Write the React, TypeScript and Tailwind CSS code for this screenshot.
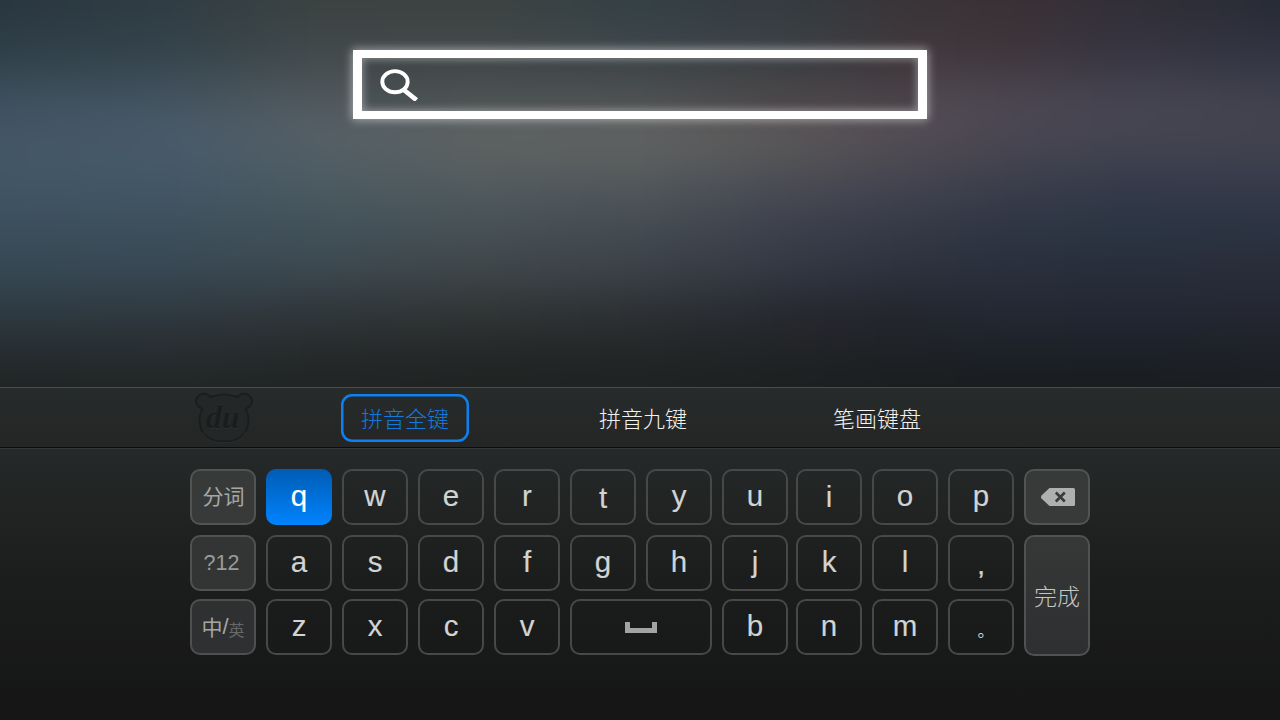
import React from "react";

// Backdrop colours: each row is a horizontal blend, rows blend into each other vertically.
// PAD is how far the blurred layers reach past the visible area.
const PAD = 32;
const STOPS = [0, 160, 320, 480, 640, 800, 900, 1010, 1120, 1280];
const ROWS: { y: number; colors: string[] }[] = [
  { y: 0, colors: ["#29363f", "#303c44", "#3b4241", "#3c4241", "#344045", "#353a3f", "#393538", "#3a3035", "#322f38", "#272b35"] },
  { y: 50, colors: ["#2f3f48", "#34434b", "#42494b", "#434a4b", "#3e474b", "#3c4145", "#40393d", "#3f363c", "#373541", "#313441"] },
  { y: 100, colors: ["#3e505e", "#435360", "#50585d", "#555b5c", "#56595a", "#534d51", "#524a51", "#4b4651", "#464451", "#42424f"] },
  { y: 130, colors: ["#435566", "#485968", "#555f66", "#5d6262", "#5f6162", "#595557", "#544d54", "#4b4753", "#464552", "#43434f"] },
  { y: 155, colors: ["#445767", "#475a6a", "#525e65", "#5b6161", "#5d605f", "#545456", "#4e4a52", "#454450", "#40424f", "#40414e"] },
  { y: 190, colors: ["#405566", "#425665", "#4b5a61", "#515a5d", "#50565a", "#484953", "#424350", "#3a3d4a", "#343a4a", "#353a4a"] },
  { y: 225, colors: ["#3c4f5c", "#3e505d", "#43525a", "#485257", "#454c53", "#3d404c", "#373b47", "#303645", "#2c3644", "#2c3443"] },
  { y: 270, colors: ["#374854", "#384854", "#3c484f", "#3f4649", "#3b4148", "#333742", "#2d323e", "#292f3c", "#282e3b", "#292d3a"] },
  { y: 310, colors: ["#2f3b43", "#303a42", "#31383c", "#323637", "#2e3235", "#272931", "#25272f", "#242934", "#242834", "#252833"] },
  { y: 350, colors: ["#272e31", "#282f32", "#272b2c", "#252929", "#242728", "#222426", "#1f2226", "#1d2229", "#1d2129", "#1f2228"] },
  { y: 387, colors: ["#202424", "#212525", "#202423", "#1f2322", "#1e2222", "#1c2021", "#1a1e1f", "#191d1f", "#191d1f", "#1b1e22"] },
];

function Backdrop() {
  return (
    <div className="-m-8 grid blur-[12px] [grid-area:1/1]" aria-hidden="true">
      {ROWS.map((row, i) => {
        const prev = i === 0 ? 0 : ROWS[i - 1].y + PAD;
        const mask = `linear-gradient(to bottom, transparent ${prev}px, black ${row.y + PAD}px)`;
        const fill = row.colors.map((c, k) => `${c} ${STOPS[k] + PAD}px`).join(", ");
        return (
          <div
            key={row.y}
            className="[grid-area:1/1]"
            style={{
              backgroundImage: `linear-gradient(to right, ${fill})`,
              maskImage: i === 0 ? undefined : mask,
            }}
          />
        );
      })}
    </div>
  );
}

function SearchBox() {
  return (
    <div className="flex h-[69px] w-[574px] items-start border-x-[9px] border-y-8 border-white bg-[#00000014] shadow-[0_0_9px_1px_rgba(255,255,255,0.5),inset_0_0_8px_1px_rgba(255,255,255,0.42)]">
      <svg className="mt-[10px] ml-[17px] h-[33px] w-[40px]" viewBox="0 0 40 33" fill="none" stroke="#fff">
        <ellipse cx="16" cy="13.700" rx="12.700" ry="10.600" strokeWidth="3.900" />
        <path d="M25 22 L37.500 32" strokeWidth="4.800" />
      </svg>
    </div>
  );
}

function BearLogo() {
  return (
    <svg className="h-[54px] w-[60px]" viewBox="0 0 60 54">
      <path
        d="M8.500 18C2 15.500 .8 10 3 6.500C6 1.500 13 1.500 17 6C25 3 35 3 43 6C47 1.500 54 1.500 57 6.500C59.200 10 58 15.500 51.500 18C54.500 23 55.500 31 52.500 39C48.500 47 41 50.500 30 50.500C18.500 50.500 11 47 7.500 39C4.500 31 5.500 23 8.500 18Z"
        fill="#242727"
        stroke="#1b1e1e"
        strokeWidth="2"
      />
      <path d="M8 41C12 49 19 52 30 52C41 52 48 49 52 41" fill="none" stroke="#2b2e2e" strokeWidth="1" />
      <text x="29.500" y="38" textAnchor="middle" fill="#2c2f2f" className="font-['Liberation_Serif',serif] text-[32px] font-bold italic">du</text>
      <text x="28.800" y="37.200" textAnchor="middle" fill="#1a1d1d" className="font-['Liberation_Serif',serif] text-[32px] font-bold italic">du</text>
    </svg>
  );
}

function TabBar() {
  return (
    <div className="flex h-[61px] items-start border-t border-b border-t-[#4a4d4e] border-b-[#0b0c0c] bg-linear-to-b from-[#272b2b] to-[#242625] font-['Noto_Sans_CJK_SC',sans-serif] text-[22px] font-light text-[#f2f2f2]">
      <div className="mt-[3px] ml-[194px]">
        <BearLogo />
      </div>
      <div className="mt-[6px] ml-[87px] flex h-12 w-32 items-center justify-center rounded-[11px] pb-px text-[#1478dd] shadow-[inset_0_0_0_2.5px_#0f80f0]">
        拼音全键
      </div>
      <div className="mt-[6px] ml-[110px] flex h-12 w-32 items-center justify-center pb-px">拼音九键</div>
      <div className="mt-[6px] ml-[106px] flex h-12 w-32 items-center justify-center pb-px">笔画键盘</div>
    </div>
  );
}

const KEY = "flex h-14 items-center justify-center rounded-[10px]";
const DARK = "border-2 border-[#474949]";
const GREY = "border-2 border-[#525454] bg-[#383a3a]";

function LetterKey({ children }: { children: string }) {
  const active = children === "q";
  return (
    <div
      className={`${KEY} pb-[2px] text-[29.5px] leading-none [-webkit-text-stroke:0.15px] ${
        active ? "bg-linear-to-b from-[#005cb4] to-[#0084ff] text-white" : `${DARK} text-[#d2d3d3]`
      }`}
    >
      <span className={children === "t" ? "pt-[3px]" : children === "i" ? "pt-px" : ""}>{children}</span>
    </div>
  );
}

const CJK = "font-['Noto_Sans_CJK_SC',sans-serif]";

function Keyboard() {
  return (
    <div className="flex h-[272px] justify-center border-t border-[#343737] bg-linear-to-b from-[#262929] via-[#1b1d1c] to-[#151515] pt-[20px] font-['Liberation_Sans',sans-serif]">
      <div className="grid grid-cols-[repeat(8,66px)] grid-rows-[66px_64px_56px] gap-x-[10px]">
        <div className={`${KEY} ${GREY} ${CJK} pr-px pb-[2px] pl-[2px] text-[21px] text-[#a5a7a7]`}>分词</div>
        {["q", "w", "e", "r", "t", "y", "u"].map((k) => (
          <LetterKey key={k}>{k}</LetterKey>
        ))}
        <div className={`${KEY} border-2 border-[#505252] bg-[#333535] pr-[3px] text-[21.5px] text-[#999b9b]`}>?12</div>
        {["a", "s", "d", "f", "g", "h", "j"].map((k) => (
          <LetterKey key={k}>{k}</LetterKey>
        ))}
        <div className={`${KEY} ${CJK} border-2 border-[#4e5050] bg-[#2e3031] pb-px text-[21px] text-[#a5a7a7]`}>
          中<span className="font-['Liberation_Sans',sans-serif] text-[22px]">/</span>
          <span className="pt-1 text-[16px] text-[#666869]">英</span>
        </div>
        {["z", "x", "c", "v"].map((k) => (
          <LetterKey key={k}>{k}</LetterKey>
        ))}
        <div className={`${KEY} ${DARK} col-span-2 pt-px`}>
          <div className="h-[11px] w-8 border-x-[5px] border-b-[5px] border-[#a2a4a4]" />
        </div>
        <LetterKey>b</LetterKey>
      </div>
      <div className="ml-2 grid grid-cols-[repeat(4,66px)] grid-rows-[66px_64px_56px] gap-x-[10px]">
        {["i", "o", "p"].map((k) => (
          <LetterKey key={k}>{k}</LetterKey>
        ))}
        <div className={`${KEY} ${GREY} pl-[2px]`}>
          <svg className="h-[18px] w-[34px]" viewBox="0 0 34 18">
            <path d="M8.500 0H32.500Q34 0 34 1.500V16.500Q34 18 32.500 18H8.500L.5 10.500Q-.5 9 .5 7.500Z" fill="#aeb0b0" />
            <path d="M14.800 4.500L23.800 13.500M23.800 4.500L14.800 13.500" stroke="#393b3b" strokeWidth="2.600" />
          </svg>
        </div>
        {["k", "l"].map((k) => (
          <LetterKey key={k}>{k}</LetterKey>
        ))}
        <div className={`${KEY} ${DARK} pt-[4px] text-[26px] leading-none text-[#d2d3d3] [-webkit-text-stroke:0.5px]`}>,</div>
        <div className="row-span-2 flex h-[121px] items-center justify-center rounded-[10px] border-2 border-[#505252] bg-linear-to-b from-[#363838] to-[#2d2f30] font-['Noto_Sans_CJK_SC',sans-serif] text-[23px] font-light text-[#c4c6c6]">
          完成
        </div>
        {["n", "m"].map((k) => (
          <LetterKey key={k}>{k}</LetterKey>
        ))}
        <div className={`${KEY} ${DARK} ${CJK} pt-[6px] text-[17px] text-[#d2d3d3]`}>
          <span className="pl-[10px]">。</span>
        </div>
      </div>
    </div>
  );
}

export default function App() {
  return (
    <div className="flex h-[720px] w-[1280px] flex-col overflow-hidden bg-[#1b1d1c]">
      <div className="grid h-[387px] overflow-hidden">
        <Backdrop />
        <div className="z-10 flex justify-center pt-[50px] [grid-area:1/1]">
          <SearchBox />
        </div>
      </div>
      <TabBar />
      <Keyboard />
    </div>
  );
}
